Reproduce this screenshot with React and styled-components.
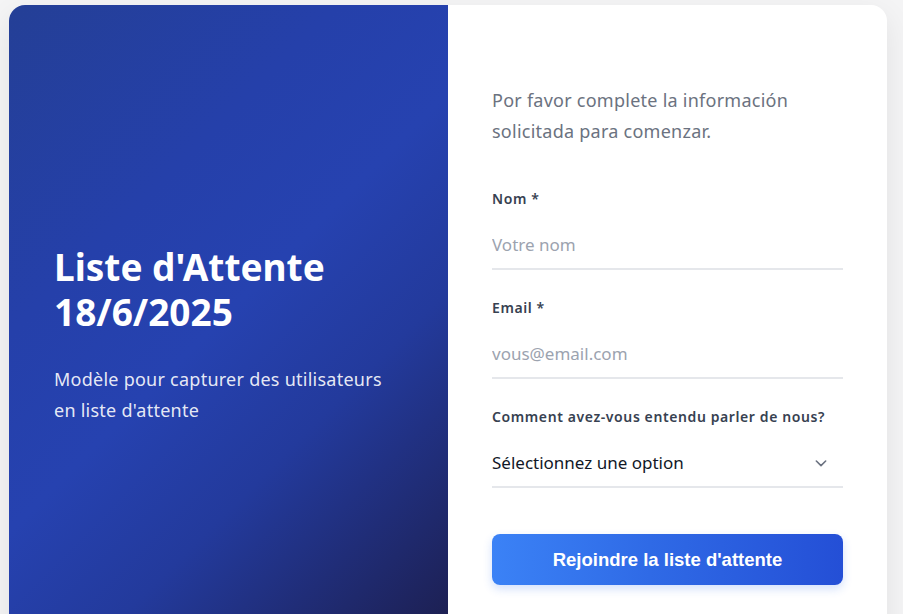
import React from 'react';
import styled, { createGlobalStyle } from 'styled-components';

const GlobalStyle = createGlobalStyle`
  html, body {
    margin: 0;
    padding: 0;
    background: #f4f4f5;
  }
  body {
    font-family: "Noto Sans", "Open Sans", sans-serif;
  }
  * { box-sizing: border-box; }
`;

const Page = styled.main`
  padding: 5px 16px 0 9px;
`;

const Card = styled.div`
  display: grid;
  grid-template-columns: 1fr 1fr;
  background: #ffffff;
  border-radius: 16px;
  overflow: hidden;
  box-shadow: 0 10px 30px rgba(0, 0, 0, 0.08);
  min-height: 660px;
`;

const Hero = styled.section`
  display: flex;
  flex-direction: column;
  justify-content: center;
  padding: 44px 45px;
  color: #ffffff;
  background: linear-gradient(135deg, #243f96 0%, #2540aa 30%, #2642b0 48%, #233a9c 66%, #1c1c48 100%);
`;

const Title = styled.h1`
  margin: 0 0 30px;
  font-size: 37px;
  line-height: 45px;
  font-weight: 700;
`;

const Lead = styled.p`
  margin: 0;
  font-size: 18px;
  line-height: 31px;
  letter-spacing: 0.25px;
  color: rgba(255, 255, 255, 0.9);
`;

const FormSide = styled.section`
  display: flex;
  flex-direction: column;
  justify-content: center;
  padding: 80px 44px;
`;

const Intro = styled.p`
  margin: 0 0 42px;
  font-size: 18px;
  line-height: 31px;
  letter-spacing: 0.25px;
  color: #6b7280;
`;

const Field = styled.div`
  display: flex;
  flex-direction: column;
  margin-bottom: 28px;
`;

const Label = styled.label`
  font-size: 14px;
  font-weight: 600;
  letter-spacing: 0.6px;
  color: #374151;
  line-height: 20px;
  margin-bottom: 24px;
`;

const Input = styled.input`
  border: none;
  border-bottom: 2px solid #e5e7eb;
  outline: none;
  padding: 0 0 12px;
  height: 37px;
  font-family: inherit;
  font-size: 17px;
  color: #111827;
  background: transparent;
  &::placeholder {
    color: #9ca3af;
  }
`;

const SelectBox = styled.div`
  display: flex;
  align-items: center;
  justify-content: space-between;
  height: 37px;
  padding: 0 14px 12px 0;
  border-bottom: 2px solid #e5e7eb;
  font-size: 17px;
  color: #111827;
`;

const Chevron = () => (
  <svg width="16" height="16" viewBox="0 0 24 24" fill="none" stroke="#6b7280" strokeWidth="2.4" strokeLinecap="round" strokeLinejoin="round">
    <path d="M5 9l7 7 7-7" />
  </svg>
);

const Submit = styled.button`
  margin-top: 18px;
  height: 51px;
  border: none;
  border-radius: 8px;
  background: linear-gradient(90deg, #3b82f6 0%, #2f6ae6 45%, #244fd6 100%);
  box-shadow: 0 4px 10px rgba(37, 99, 235, 0.2);
  color: #ffffff;
  font-family: "Liberation Sans", Arial, sans-serif;
  font-size: 18.5px;
  font-weight: 700;
  cursor: pointer;
`;

export default function App() {
  return (
    <>
      <GlobalStyle />
      <Page>
        <Card>
          <Hero>
            <Title>Liste d'Attente<br />18/6/2025</Title>
            <Lead>Modèle pour capturer des utilisateurs en liste d'attente</Lead>
          </Hero>
          <FormSide>
            <Intro>Por favor complete la información solicitada para comenzar.</Intro>
            <Field>
              <Label>Nom *</Label>
              <Input placeholder="Votre nom" />
            </Field>
            <Field>
              <Label>Email *</Label>
              <Input placeholder="vous@email.com" />
            </Field>
            <Field>
              <Label>Comment avez-vous entendu parler de nous?</Label>
              <SelectBox>
                <span>Sélectionnez une option</span>
                <Chevron />
              </SelectBox>
            </Field>
            <Submit>Rejoindre la liste d'attente</Submit>
          </FormSide>
        </Card>
      </Page>
    </>
  );
}
